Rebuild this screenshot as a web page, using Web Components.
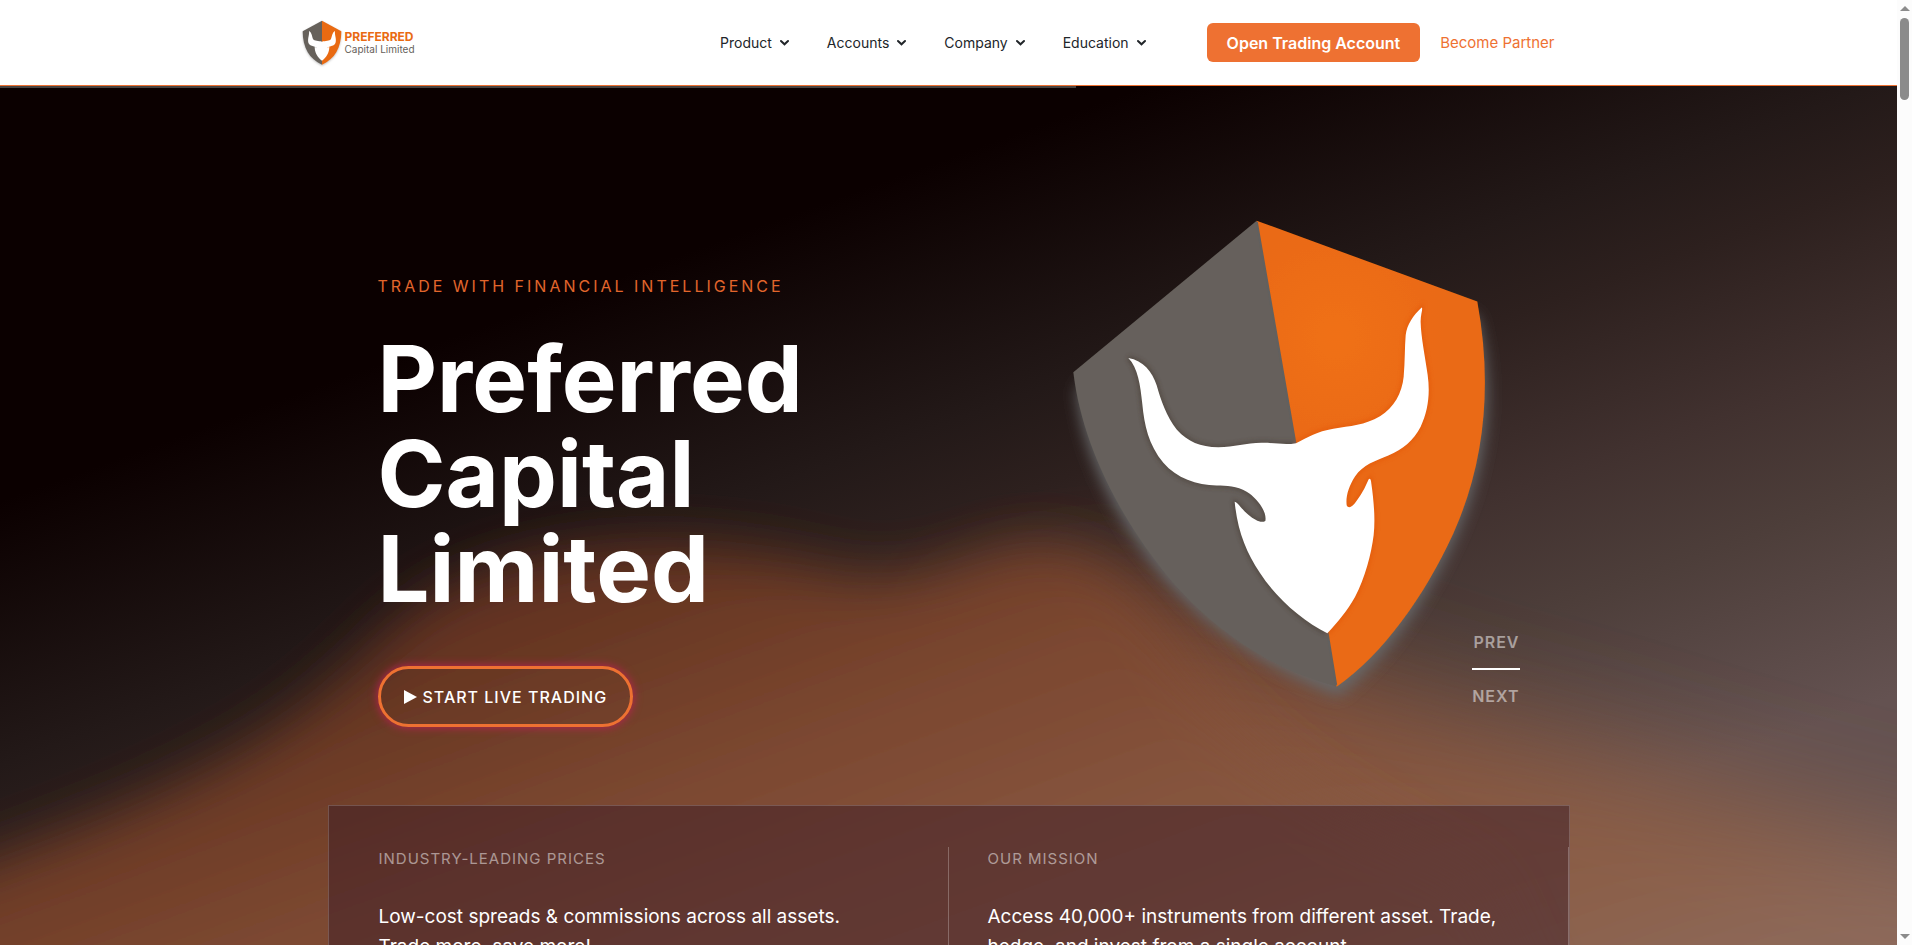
<!DOCTYPE html>
<html lang="en">
<head>
<meta charset="utf-8">
<meta name="viewport" content="width=device-width, initial-scale=1">
<title>Preferred Capital Limited</title>
<style>
  body {
    margin: 0;
    font-family: Inter, "Liberation Sans", sans-serif;
    color: #fff;
    background: #0b0000;
  }
</style>
</head>
<body>
<page-shell>
  <site-header slot="header">
    <nav-item>Product</nav-item>
    <nav-item>Accounts</nav-item>
    <nav-item>Company</nav-item>
    <nav-item>Education</nav-item>
  </site-header>
  <hero-banner>
    <span slot="eyebrow">TRADE WITH FINANCIAL INTELLIGENCE</span>
    <span slot="title">Preferred<br>Capital<br>Limited</span>
    <glow-button slot="action">START LIVE TRADING</glow-button>
    <bull-shield slot="art"></bull-shield>
    <slide-pager slot="pager"></slide-pager>
    <info-panel slot="panel">
      <info-column heading="INDUSTRY-LEADING PRICES">Low-cost spreads &amp; commissions across all assets.<br>Trade more, save more!</info-column>
      <info-column heading="OUR MISSION">Access 40,000+ instruments from different asset. Trade,<br>hedge, and invest from a single account.</info-column>
    </info-panel>
  </hero-banner>
</page-shell>

<script>
class BaseElement extends HTMLElement {
  constructor() {
    super();
    const template = document.createElement("template");
    template.innerHTML = this.constructor.markup;
    this.attachShadow({ mode: "open" });
    this.shadowRoot.appendChild(template.content.cloneNode(true));
  }
}

class PageShell extends BaseElement {
  static get markup() {
    return `
      <style>
        :host {
          display: flex;
          height: 100vh;
        }
        .view {
          flex: 1;
          min-width: 0;
          overflow-y: auto;
          scrollbar-width: none;
        }
        .bar {
          display: flex;
          flex-direction: column;
          align-items: center;
          box-sizing: border-box;
          width: 15px;
          padding: 6px 0;
          background: #fcfcfc;
        }
        .thumb {
          width: 9px;
          height: 82px;
          margin: 7px 0 auto;
          border-radius: 5px;
          background: #8b8b8b;
        }
        svg {
          display: block;
          fill: #8b8b8b;
        }
      </style>
      <div class="view">
        <slot name="header"></slot>
        <slot></slot>
      </div>
      <div class="bar" aria-hidden="true">
        <svg width="10" height="5"><path d="M0 5L5 0L10 5Z"/></svg>
        <div class="thumb"></div>
        <svg width="10" height="5"><path d="M0 0H10L5 5Z"/></svg>
      </div>
    `;
  }
}

class SiteHeader extends BaseElement {
  static get markup() {
    return `
      <style>
        :host {
          display: block;
          position: relative;
          z-index: 1;
          background: #fff;
          border-bottom: 1px solid #ee7132;
        }
        .bar {
          display: flex;
          align-items: center;
          box-sizing: border-box;
          max-width: 1296px;
          min-height: 85px;
          margin: 0 auto;
          padding: 0 42px 0 1px;
        }
        nav {
          display: flex;
          gap: 38px;
          margin-left: auto;
        }
        .actions {
          display: flex;
          align-items: center;
          gap: 20px;
          margin-left: 61px;
        }
        button {
          height: 39px;
          padding: 0 20px;
          border: 0;
          border-radius: 6px;
          background: #ee7132;
          color: #fff;
          font: 600 16px/24px Inter, sans-serif;
          white-space: nowrap;
          cursor: pointer;
        }
        .partner {
          color: #ee7132;
          font-size: 15px;
          line-height: 24px;
          text-decoration: none;
          white-space: nowrap;
        }
        /* reading progress, hangs below the border */
        .progress {
          position: absolute;
          top: 100%;
          left: 0;
          width: 56.7%;
          height: 2px;
          margin-top: 1px;
          background: #494441;
        }
      </style>
      <div class="bar">
        <site-logo></site-logo>
        <nav><slot></slot></nav>
        <div class="actions">
          <button type="button">Open Trading Account</button>
          <a class="partner" href="#partner">Become Partner</a>
        </div>
      </div>
      <div class="progress"></div>
    `;
  }
}

class SiteLogo extends BaseElement {
  static get markup() {
    return `
      <style>
        :host {
          display: block;
        }
        a {
          display: flex;
          align-items: center;
          gap: 3px;
          color: #66615b;
          font-size: 10px;
          line-height: 12px;
          text-decoration: none;
          white-space: nowrap;
        }
        svg {
          display: block;
          width: 40px;
          height: 46px;
          filter: drop-shadow(0 1px 1px #8888);
        }
        .name {
          display: flex;
          flex-direction: column;
        }
        strong {
          color: #e96a12;
          font-size: 12px;
        }
      </style>
      <a href="#home">
        <svg viewBox="0 0 120 138" aria-hidden="true">
          <path fill="#66615b" d="M60 2L2 34C2 82 22 118 60 134Z"/>
          <path fill="#e96a12" d="M60 2L118 34C118 82 98 118 60 134Z"/>
          <path fill="#fff" d="M21 33C30 38 30 50 33 57C37 64 50 62 60 65C70 62 83 64 87 57C90 50 90 38 99 33C97 46 106 60 99 72C93 80 80 77 75 85L82 80C82 98 73 112 60 122C47 112 38 98 38 80L45 85C40 77 27 80 21 72C14 60 23 46 21 33Z"/>
        </svg>
        <span class="name">
          <strong>PREFERRED</strong>
          <span>Capital Limited</span>
        </span>
      </a>
    `;
  }
}

class NavItem extends BaseElement {
  static get markup() {
    return `
      <style>
        :host {
          display: block;
        }
        button {
          display: flex;
          align-items: center;
          gap: 8px;
          padding: 0;
          border: 0;
          background: none;
          color: #212529;
          font: 14px/24px Inter, sans-serif;
          cursor: pointer;
        }
        svg {
          fill: none;
          stroke: currentColor;
          stroke-width: 2;
          stroke-linecap: round;
        }
      </style>
      <button type="button" aria-haspopup="true">
        <slot></slot>
        <svg width="9" height="7" viewBox="0 0 9 7" aria-hidden="true"><path d="M1 2L4.500 5.300L8 2"/></svg>
      </button>
    `;
  }
}

class HeroBanner extends BaseElement {
  static get markup() {
    return `
      <style>
        :host {
          display: block;
          position: relative;
          overflow: hidden;
        }
        .backdrop {
          position: absolute;
          inset: 0;
          width: 100%;
          height: 859px;
        }
        .wrap {
          position: relative;
          max-width: 1242px;
          margin: 0 auto;
        }
        .stage {
          display: flex;
          justify-content: space-between;
          align-items: flex-start;
          position: relative;
          padding: 0 50px;
        }
        .copy {
          padding: 188px 0 78px;
        }
        p {
          margin: 0 0 33px;
          color: #e2662c;
          font-size: 16px;
          line-height: 24px;
          letter-spacing: 3px;
        }
        h1 {
          margin: 0 0 50px;
          font-size: 92px;
          font-weight: 700;
          line-height: 95px;
        }
        .art {
          padding-top: 103px;
        }
        .pager {
          position: absolute;
          right: 50px;
          bottom: 99px;
        }
      </style>
      <svg class="backdrop" viewBox="0 86 1897 859" preserveAspectRatio="none" aria-hidden="true">
        <defs>
          <linearGradient id="base" gradientUnits="userSpaceOnUse" x1="160" y1="443" x2="442" y2="1222">
            <stop offset="0" stop-color="#0b0000"/>
            <stop offset=".3" stop-color="#231918"/>
            <stop offset=".41" stop-color="#2d201e"/>
            <stop offset=".61" stop-color="#41312f"/>
            <stop offset=".76" stop-color="#4d3e3a"/>
            <stop offset="1" stop-color="#645251"/>
          </linearGradient>
          <linearGradient id="warm" gradientUnits="userSpaceOnUse" x1="255" y1="705" x2="513" y2="1419">
            <stop offset="0" stop-color="#633320"/>
            <stop offset=".26" stop-color="#7a462f"/>
            <stop offset=".48" stop-color="#84523b"/>
            <stop offset=".85" stop-color="#8c6049"/>
            <stop offset="1" stop-color="#8d6a5c"/>
          </linearGradient>
          <filter id="soft" x="-10%" y="-30%" width="120%" height="160%">
            <feGaussianBlur stdDeviation="27"/>
          </filter>
          <filter id="softer" x="-20%" y="-40%" width="140%" height="180%">
            <feGaussianBlur stdDeviation="55"/>
          </filter>
        </defs>
        <rect y="86" width="1897" height="859" fill="url(#base)"/>
        <path filter="url(#softer)" fill="url(#warm)" d="M950 640C1080 570 1190 590 1290 645C1400 700 1500 720 1600 750C1750 800 1850 825 2150 900V1200H950Z"/>
        <path filter="url(#soft)" fill="url(#warm)" d="M-150 910C20 850 200 790 300 712C390 645 400 590 530 560C630 535 740 545 830 570C900 588 940 568 1000 550C1080 530 1130 570 1180 650C1230 740 1330 810 1480 880L1600 1150H-150Z"/>
      </svg>
      <div class="wrap">
        <div class="stage">
          <div class="copy">
            <p><slot name="eyebrow"></slot></p>
            <h1><slot name="title"></slot></h1>
            <slot name="action"></slot>
          </div>
          <div class="art"><slot name="art"></slot></div>
          <div class="pager"><slot name="pager"></slot></div>
        </div>
        <slot name="panel"></slot>
      </div>
    `;
  }
}

class GlowButton extends BaseElement {
  static get markup() {
    return `
      <style>
        :host {
          display: block;
        }
        button {
          display: flex;
          align-items: center;
          gap: 6px;
          height: 61px;
          padding: 0 23px;
          border: 3px solid #ee7132;
          border-radius: 31px;
          background: none;
          box-shadow: 0 0 10px #c01f55;
          color: #fff;
          font: 500 16px/24px Inter, sans-serif;
          letter-spacing: 1px;
          cursor: pointer;
        }
      </style>
      <button type="button">
        <svg width="13" height="14" aria-hidden="true"><path fill="#fff" d="M0 0L13 7L0 14Z"/></svg>
        <slot></slot>
      </button>
    `;
  }
}

class BullShield extends BaseElement {
  static get markup() {
    return `
      <style>
        :host {
          display: block;
        }
        svg {
          display: block;
          width: 480px;
          height: 540px;
          overflow: visible;
        }
      </style>
      <svg viewBox="0 0 1440 1568" preserveAspectRatio="none" role="img" aria-label="Bull head on a shield">
        <defs>
          <radialGradient id="orange" gradientUnits="userSpaceOnUse" cx="890" cy="430" r="330">
            <stop offset="0" stop-color="#f07016"/>
            <stop offset="1" stop-color="#ea6a12"/>
          </radialGradient>
          <filter id="glow" x="-20%" y="-20%" width="140%" height="140%">
            <feGaussianBlur stdDeviation="22"/>
          </filter>
          <filter id="edge" x="-20%" y="-20%" width="140%" height="140%">
            <feGaussianBlur stdDeviation="2"/>
          </filter>
          <filter id="rim" x="-20%" y="-20%" width="140%" height="140%">
            <feGaussianBlur stdDeviation="7"/>
          </filter>
        </defs>
        <path filter="url(#glow)" fill="#68696b" d="M112 580L650 150L1310 370C1365 560 1350 790 1240 1020C1150 1210 1030 1370 895 1472C690 1395 520 1290 380 1140C225 960 125 760 112 580Z"/>
        <g filter="url(#edge)">
          <path fill="#66615b" d="M650 92L100 532C125 735 230 940 375 1115C510 1275 690 1395 890 1445Z"/>
          <path fill="url(#orange)" d="M650 92L1312 327C1355 555 1340 785 1240 1000C1155 1180 1030 1350 890 1445Z"/>
          <path fill="none" stroke="#62605f" stroke-width="7" d="M650 96L766 740M862 1288L888 1440"/>
        </g>
        <g filter="url(#rim)" fill="none" stroke-width="9" opacity=".6">
          <path stroke="#3d3026" d="M265 491C310 498 337 532 350 570C362 612 380 662 410 698C445 735 480 748 535 750C585 750 620 736 670 737C705 737 735 744 764 738M265 491C294 520 301 570 307 625C313 685 325 742 370 795C410 840 470 860 530 861C560 862 590 862 620 879C648 895 682 935 676 964C663 971 645 962 625 946C605 930 592 908 584 908C592 990 618 1055 660 1115C710 1190 790 1255 858 1288"/>
          <path stroke="#e04e00" d="M768 738C805 720 830 704 880 696C930 688 975 686 1020 660C1062 635 1086 592 1091 545C1095 500 1094 460 1097 425C1101 392 1120 367 1145 344C1141 365 1142 388 1142 388C1143 430 1155 485 1163 540C1171 595 1164 645 1142 690C1120 730 1090 755 1045 774C1005 790 970 800 945 835C925 865 917 895 920 918C926 930 938 922 950 905C970 880 978 860 990 840C1002 910 1006 960 1001 1005C994 1060 975 1130 945 1185C922 1225 892 1260 866 1288"/>
        </g>
        <path fill="#fff" d="M265 491C310 498 337 532 350 570C362 612 380 662 410 698C445 735 480 748 535 750C585 750 620 736 670 737C705 737 735 744 768 738C805 720 830 704 880 696C930 688 975 686 1020 660C1062 635 1086 592 1091 545C1095 500 1094 460 1097 425C1101 392 1120 367 1145 344C1150 347 1141 365 1142 388C1143 430 1155 485 1163 540C1171 595 1164 645 1142 690C1120 730 1090 755 1045 774C1005 790 970 800 945 835C925 865 917 895 920 918C926 930 938 922 950 905C970 880 978 860 986 843C990 838 993 843 994 855C1002 910 1006 960 1001 1005C994 1060 975 1130 945 1185C922 1225 892 1260 862 1290C790 1255 710 1190 660 1115C618 1055 592 990 584 908C592 908 605 930 625 946C645 962 663 971 676 964C682 935 648 895 620 879C590 862 560 862 530 861C470 860 410 840 370 795C325 742 313 685 307 625C301 570 294 520 265 491Z"/>
      </svg>
    `;
  }
}

class SlidePager extends BaseElement {
  static get markup() {
    return `
      <style>
        :host {
          display: flex;
          flex-direction: column;
          gap: 16px;
        }
        button {
          padding: 0;
          border: 0;
          background: none;
          color: #ffffff80;
          font: 600 16px/20px Inter, sans-serif;
          letter-spacing: 1px;
          text-align: right;
          cursor: pointer;
        }
        .line {
          height: 2px;
          background: #fff;
        }
      </style>
      <button type="button">PREV</button>
      <div class="line"></div>
      <button type="button">NEXT</button>
    `;
  }
}

class InfoPanel extends BaseElement {
  static get markup() {
    return `
      <style>
        :host {
          display: grid;
          grid-template-columns: 1fr 1fr;
          padding: 41px 0;
          border: 1px solid #ffffff30;
          background: #33142470;
        }
      </style>
      <slot></slot>
    `;
  }
}

class InfoColumn extends BaseElement {
  static get markup() {
    return `
      <style>
        :host {
          display: block;
          padding: 0 24px 0 39px;
          border-right: 1px solid #ffffff40;
        }
        :host(:first-child) {
          padding-left: 50px;
        }
        h2 {
          margin: 0 0 31px;
          color: #ffffff80;
          font-size: 15px;
          font-weight: 400;
          line-height: 24px;
          letter-spacing: 1px;
        }
        p {
          margin: 0;
          font-size: 19px;
          line-height: 30px;
          white-space: nowrap;
        }
      </style>
      <h2></h2>
      <p><slot></slot></p>
    `;
  }

  connectedCallback() {
    this.shadowRoot.querySelector("h2").textContent = this.heading;
  }

  get heading() {
    return this.getAttribute("heading") || "";
  }
}

customElements.define("page-shell", PageShell);
customElements.define("site-logo", SiteLogo);
customElements.define("site-header", SiteHeader);
customElements.define("nav-item", NavItem);
customElements.define("hero-banner", HeroBanner);
customElements.define("glow-button", GlowButton);
customElements.define("bull-shield", BullShield);
customElements.define("slide-pager", SlidePager);
customElements.define("info-panel", InfoPanel);
customElements.define("info-column", InfoColumn);
</script>
</body>
</html>
